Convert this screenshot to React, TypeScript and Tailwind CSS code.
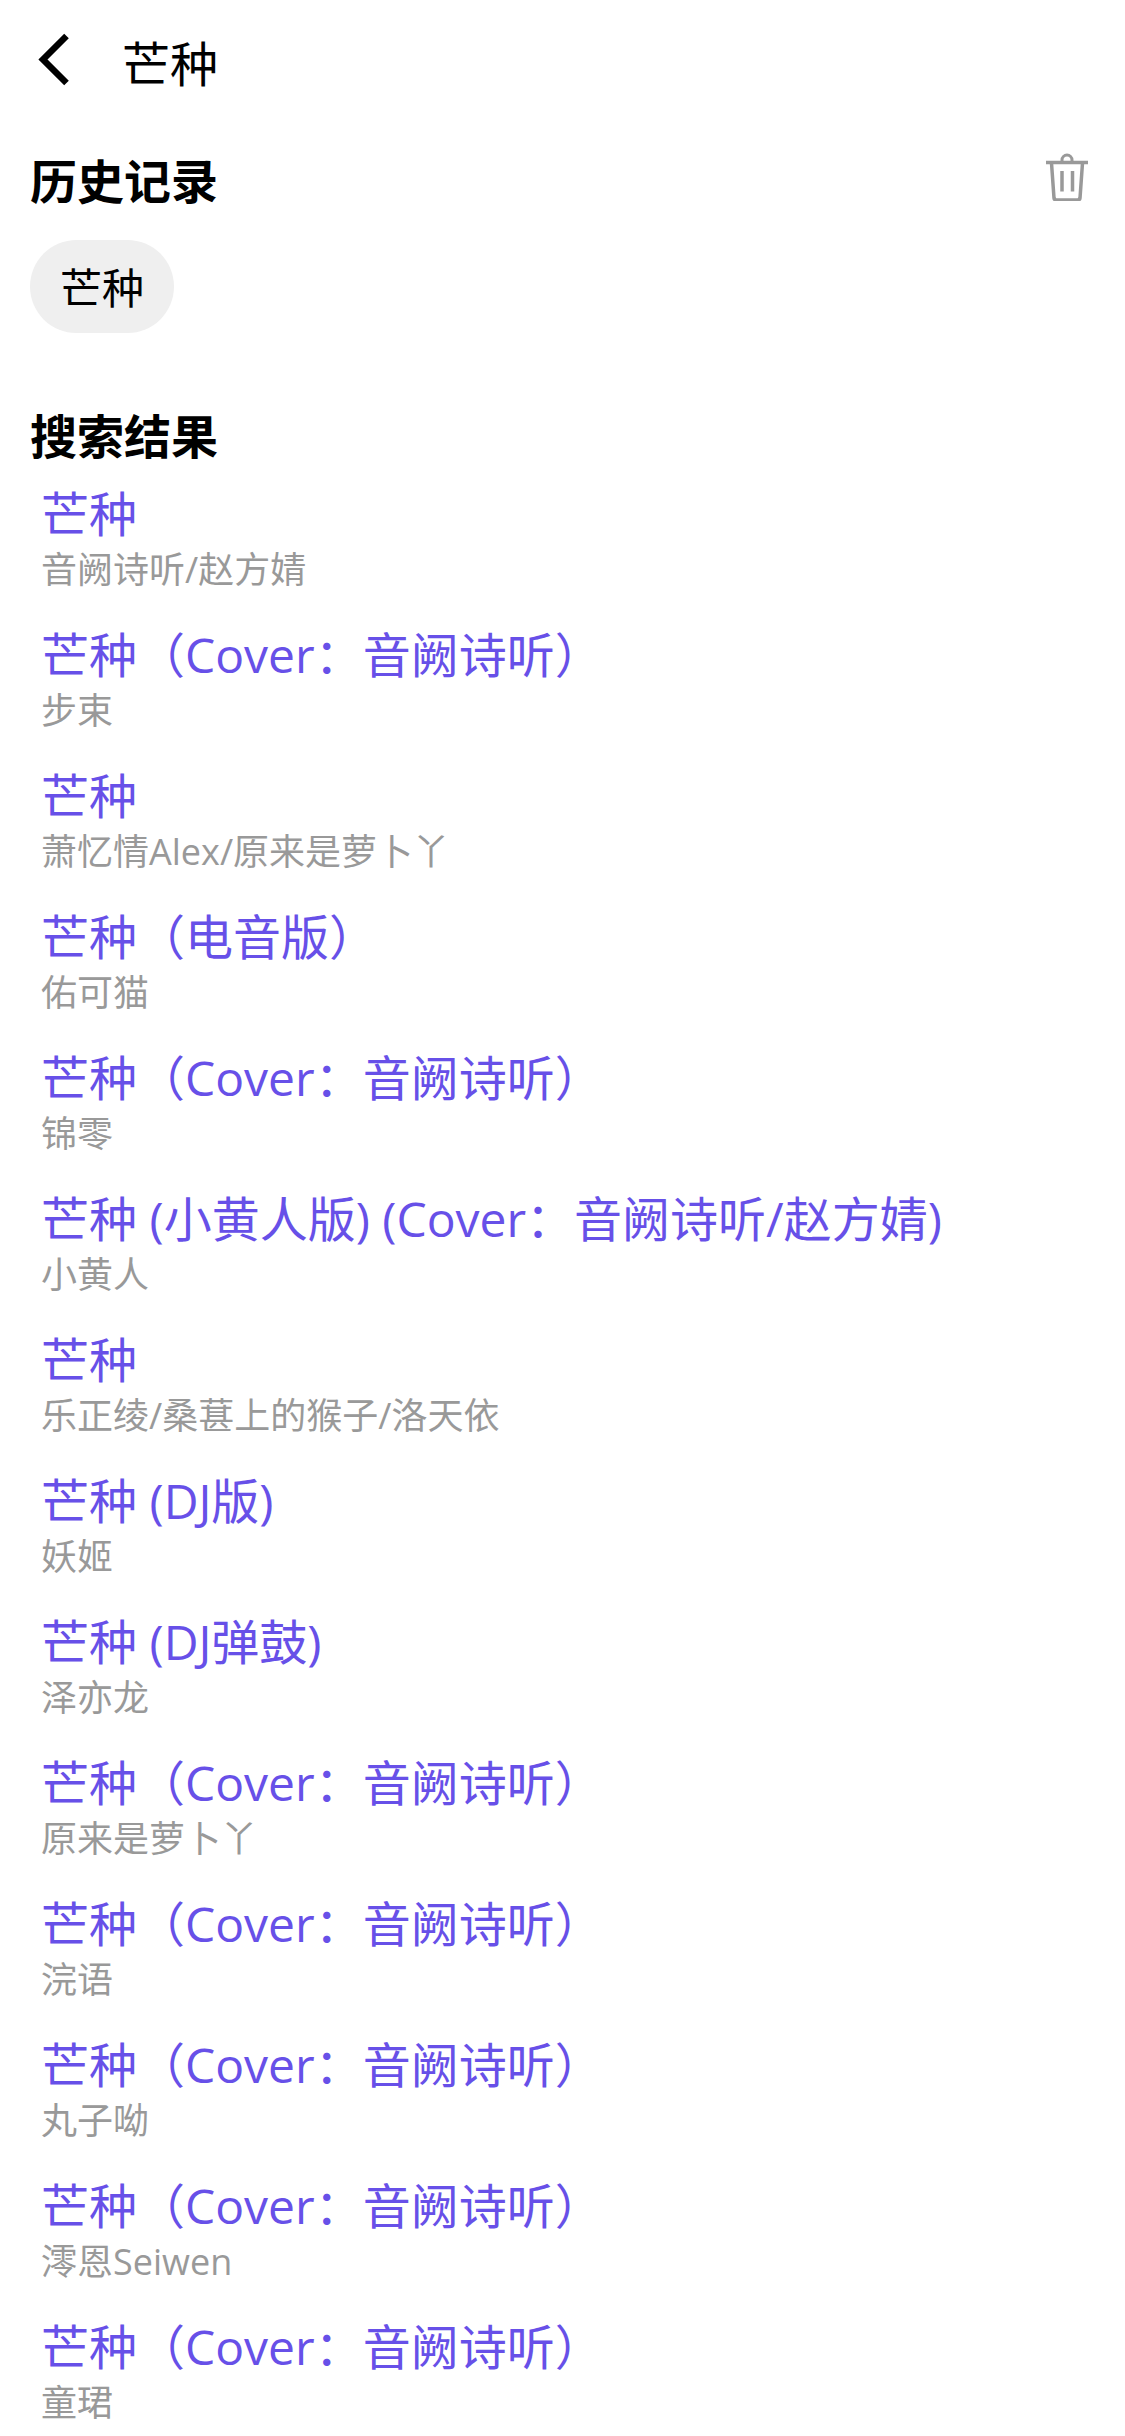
const songs = [
  { title: '芒种', artist: '音阙诗听/赵方婧' },
  { title: '芒种（Cover：音阙诗听）', artist: '步束' },
  { title: '芒种', artist: '萧忆情Alex/原来是萝卜丫' },
  { title: '芒种（电音版）', artist: '佑可猫' },
  { title: '芒种（Cover：音阙诗听）', artist: '锦零' },
  { title: '芒种 (小黄人版) (Cover：音阙诗听/赵方婧)', artist: '小黄人' },
  { title: '芒种', artist: '乐正绫/桑葚上的猴子/洛天依' },
  { title: '芒种 (DJ版)', artist: '妖姬' },
  { title: '芒种 (DJ弹鼓)', artist: '泽亦龙' },
  { title: '芒种（Cover：音阙诗听）', artist: '原来是萝卜丫' },
  { title: '芒种（Cover：音阙诗听）', artist: '浣语' },
  { title: '芒种（Cover：音阙诗听）', artist: '丸子呦' },
  { title: '芒种（Cover：音阙诗听）', artist: '澪恩Seiwen' },
  { title: '芒种（Cover：音阙诗听）', artist: '童珺' },
];

function SearchBar() {
  return (
    <header className="flex h-32 items-start gap-9 pt-7 pl-8">
      <button type="button" aria-label="返回" className="shrink-0">
        <svg width="54" height="64" viewBox="0 0 54 64" fill="none" className="block">
          <path d="M34.5 8 L11 31.500 L34.5 55" stroke="#000" strokeWidth="6.5" />
        </svg>
      </button>
      <input
        type="search"
        aria-label="搜索"
        defaultValue="芒种"
        className="h-[66px] min-w-0 flex-1 appearance-none bg-transparent text-5xl outline-none"
      />
    </header>
  );
}

function History() {
  return (
    <section className="px-[30px]">
      <div className="flex h-28 items-start justify-between pt-[21px]">
        <h2 className="text-[47px] leading-[64px] font-bold">历史记录</h2>
        <button type="button" aria-label="清空历史记录" className="pr-1.5">
          <svg width="44" height="52" viewBox="0 0 44 52" fill="none" stroke="#999" className="block">
            <path d="M1 13.500 H43" strokeWidth="3.5" />
            <path d="M17 12.5 V11 A5 5 0 0 1 27 11 V12.5" strokeWidth="3" />
            <path d="M6.500 14 L9 49 Q9.200 51 11.500 51 H32.500 Q34.800 51 35 49 L37.500 14" strokeWidth="3.500" />
            <path d="M17 22 V42.500 M27.500 22 V42.500" strokeWidth="3.500" />
          </svg>
        </button>
      </div>
      <button type="button" className="block h-[93px] rounded-full bg-[#efefef] px-[30px] pt-0.5 text-[42px] leading-[56px]">
        芒种
      </button>
    </section>
  );
}

function Results() {
  return (
    <section className="pt-[71px]">
      <h2 className="px-[30px] text-[47px] leading-[64px] font-bold">搜索结果</h2>
      <ul className="pt-3.5">
        {songs.map((song, i) => (
          <li key={i} className="h-[141px] px-[41px]">
            <a href="#" className="block">
              <span className="block text-5xl leading-[64px] text-[#6750e8]">{song.title}</span>
              <span className="block text-4xl leading-[48px] text-[#999]">{song.artist}</span>
            </a>
          </li>
        ))}
      </ul>
    </section>
  );
}

export default function App() {
  return (
    <main className="h-screen overflow-hidden bg-white font-['Open_Sans','Noto_Sans_CJK_SC',sans-serif] text-black" lang="zh-CN">
      <SearchBar />
      <History />
      <Results />
    </main>
  );
}
